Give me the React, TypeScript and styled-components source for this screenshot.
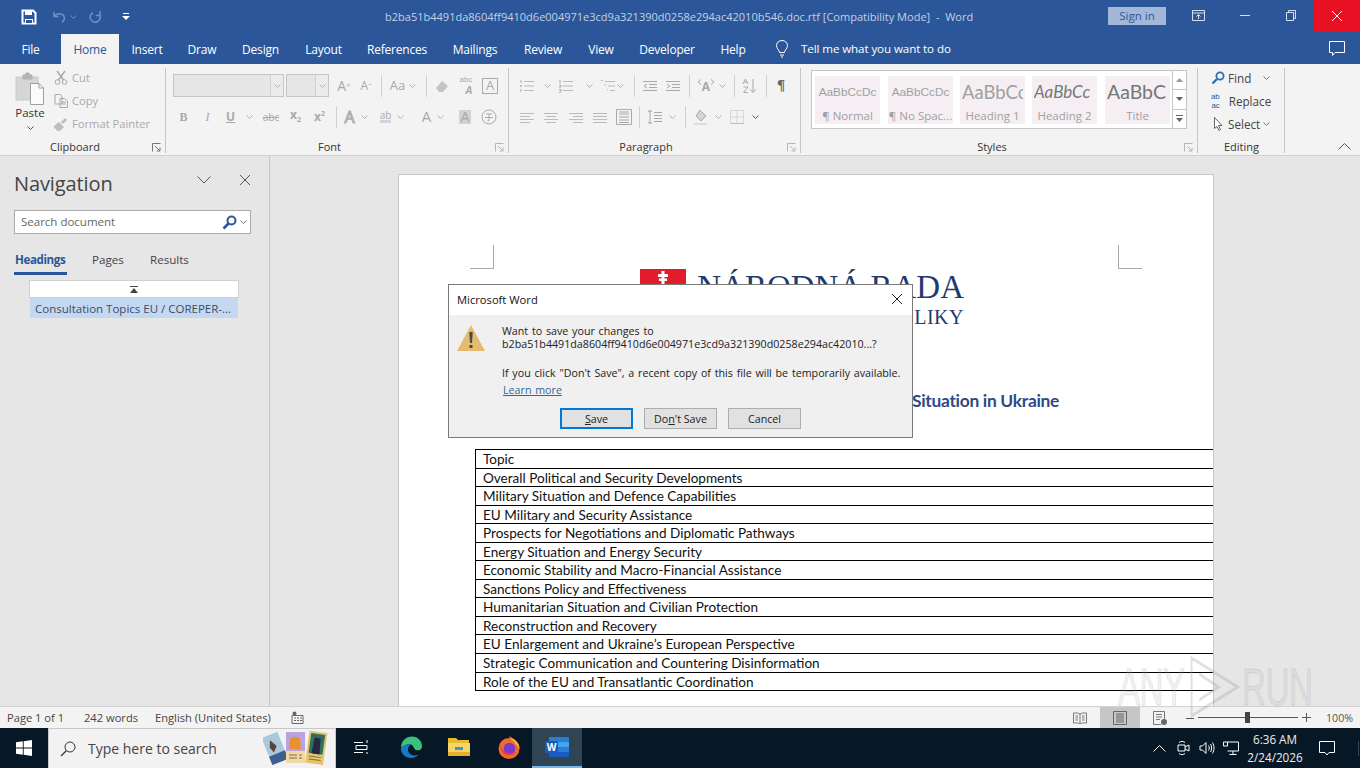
import * as React from 'react'
import { FC, ReactNode } from 'react'
import styled, { createGlobalStyle } from 'styled-components'

const UI = `"Open Sans", "Noto Sans", "Liberation Sans", sans-serif`
const OFF = '#a9a9a9'

const Global = createGlobalStyle`
  html, body { margin: 0; padding: 0; background: #e6e6e6; }
  * { box-sizing: border-box; }
`

const Screen = styled.div`
  position: relative;
  width: 1360px;
  height: 768px;
  overflow: hidden;
  display: flex;
  flex-direction: column;
  font-family: ${UI};
  font-size: 12px;
  color: #333;
`

/* title bar */
const TitleBar = styled.div`
  height: 34px;
  flex: none;
  display: flex;
  align-items: flex-start;
  background: #2b579a;
  color: #fff;
`
const Qat = styled.div`
  width: 385px;
  height: 34px;
  flex: none;
  display: flex;
  align-items: center;
  padding-left: 21px;
`
const QatSlot = styled.div<{ $w: number; $gap?: number }>`
  width: ${p => p.$w}px;
  flex: none;
  display: flex;
  align-items: center;
  gap: ${p => p.$gap ?? 0}px;
`
const DocName = styled.div`
  width: 723px;
  flex: none;
  line-height: 34px;
  font-size: 11.03px;
  color: #c3d0e4;
  white-space: pre;
`
const SignIn = styled.div`
  width: 58px;
  height: 18px;
  margin-top: 7px;
  flex: none;
  background: #a3b7d6;
  color: #2b579a;
  text-align: center;
  line-height: 18px;
  font-size: 11.5px;
`
const WinButton = styled.div<{ $w: number; $red?: boolean; $pl?: number }>`
  width: ${p => p.$w}px;
  padding-left: ${p => p.$pl ?? 0}px;
  height: 31px;
  flex: none;
  display: flex;
  align-items: center;
  justify-content: center;
  background: ${p => (p.$red ? '#e81123' : 'transparent')};
`

/* tabs */
const TabBar = styled.div`
  height: 30px;
  flex: none;
  display: flex;
  background: #2b579a;
`
const Tab = styled.div<{ $w: number; $active?: boolean }>`
  width: ${p => p.$w}px;
  flex: none;
  text-align: center;
  line-height: 30px;
  padding-top: 1px;
  font-size: 12px;
  letter-spacing: -0.2px;
  color: ${p => (p.$active ? '#2b579a' : '#fff')};
  background: ${p => (p.$active ? '#f3f3f3' : 'transparent')};
`
const TellMe = styled.div`
  display: flex;
  align-items: center;
  gap: 12px;
  margin-left: 16px;
  width: 554px;
  padding-bottom: 1px;
  color: #fff;
  font-size: 11.6px;
  letter-spacing: -0.1px;
`
const CommentSlot = styled.div`
  display: flex;
  align-items: center;
`

/* ribbon */
const Ribbon = styled.div`
  height: 92px;
  flex: none;
  display: flex;
  background: #f3f3f3;
  border-bottom: 1px solid #d2d2d2;
`
const Group = styled.div<{ $w: number }>`
  position: relative;
  width: ${p => p.$w}px;
  flex: none;
  height: 91px;
  display: flex;
  flex-direction: column;
  &::after {
    content: '';
    position: absolute;
    right: 0;
    top: 4px;
    bottom: 2px;
    width: 1px;
    background: #c6c6c6;
  }
`
const GroupBody = styled.div`
  flex: 1;
  display: flex;
  min-height: 0;
`
const GroupLabel = styled.div<{ $pr?: number }>`
  height: 18px;
  margin-bottom: -1px;
  padding-right: ${p => p.$pr ?? 0}px;
  flex: none;
  text-align: center;
  line-height: 18px;
  font-size: 11px;
  color: #333;
`
const Launcher = styled.svg`
  position: absolute;
  right: 5px;
  bottom: 3px;
  width: 9px;
  height: 9px;
`
const PasteColumn = styled.div`
  width: 54px;
  flex: none;
  padding: 8px 0 0 15px;
  display: flex;
  flex-direction: column;
  font-size: 11.5px;
  color: #333;
`
const PasteText = styled.div`
  width: 30px;
  text-align: center;
  line-height: 16px;
`
const PasteChevron = styled.div`
  width: 30px;
  display: flex;
  justify-content: center;
  padding-top: 5px;
`
const ClipColumn = styled.div`
  display: flex;
  flex-direction: column;
  padding-top: 2px;
  color: ${OFF};
  font-size: 11.2px;
`
const ClipRow = styled.div`
  height: 23px;
  display: flex;
  align-items: center;
  gap: 4px;
  white-space: nowrap;
`
const RowStack = styled.div<{ $left: number }>`
  display: flex;
  flex-direction: column;
  padding: 10px 0 0 ${p => p.$left}px;
  gap: 8px;
`
const ToolRow = styled.div`
  height: 23px;
  display: flex;
  align-items: center;
`
const Cell = styled.div<{ $w: number; $gap?: number }>`
  width: ${p => p.$w}px;
  height: 22px;
  flex: none;
  display: flex;
  align-items: center;
  justify-content: center;
  gap: ${p => p.$gap ?? 0}px;
  color: ${OFF};
`
const StackedGlyph = styled.div<{ $color?: string }>`
  display: flex;
  flex-direction: column;
  align-items: flex-end;
  font-family: "Liberation Sans", sans-serif;
  color: ${p => p.$color ?? OFF};
`
const StackTop = styled.span<{ $size: number }>`
  font-size: ${p => p.$size}px;
  line-height: ${p => p.$size + 1.2}px;
`
const StackBottom = styled.span<{ $size: number; $italic?: boolean }>`
  font-size: ${p => p.$size}px;
  line-height: ${p => p.$size + 1.2}px;
  font-weight: ${p => (p.$italic ? 700 : 400)};
  font-style: ${p => (p.$italic ? 'italic' : 'normal')};
`
const Sep = styled.div<{ $w: number }>`
  width: ${p => p.$w}px;
  height: 22px;
  flex: none;
  display: flex;
  justify-content: center;
  &::before {
    content: '';
    width: 1px;
    background: #d0d0d0;
  }
`
const Combo = styled.div<{ $w: number; $ml?: number }>`
  width: ${p => p.$w}px;
  margin-left: ${p => p.$ml ?? 0}px;
  height: 23px;
  flex: none;
  background: #e6e6e6;
  border: 1px solid #c6c6c6;
  display: flex;
  justify-content: flex-end;
`
const ComboArrow = styled.div`
  width: 13px;
  border-left: 1px solid #d0d0d0;
  background: #ececec;
  display: flex;
  align-items: center;
  justify-content: center;
`
const Glyph = styled.span<{ $size?: number; $bold?: boolean; $italic?: boolean; $under?: boolean; $serif?: boolean; $box?: boolean; $shade?: boolean; $dark?: boolean; $outline?: boolean; $bar?: boolean }>`
  font-family: ${p => (p.$serif ? '"Liberation Serif", serif' : UI)};
  font-size: ${p => p.$size ?? 13}px;
  font-weight: ${p => (p.$bold ? 700 : 400)};
  font-style: ${p => (p.$italic ? 'italic' : 'normal')};
  text-decoration: ${p => (p.$under ? 'underline' : 'none')};
  color: ${p => (p.$outline ? 'transparent' : p.$dark ? '#666' : OFF)};
  line-height: 1;
  ${p => (p.$box ? 'border: 1px solid #aaa; padding: 0 3px 1px;' : '')}
  ${p => (p.$shade ? 'background: #d2d2d2; padding: 0 2px;' : '')}
  ${p => (p.$outline ? `-webkit-text-stroke: 1px ${OFF};` : '')}
  ${p => (p.$bar ? 'border-bottom: 3px solid #d4d4d4;' : '')}
`
const Tiny = styled.sub`
  font-size: 7px;
`
const Small = styled.sup`
  font-size: 7px;
`
const Gallery = styled.div`
  margin: 6px 0 0 10px;
  width: 376px;
  height: 59px;
  flex: none;
  background: #fff;
  border: 1px solid #c6c6c6;
  display: flex;
  padding: 5px 0 0 3px;
`
const StyleTile = styled.div<{ $mr: number }>`
  width: 65px;
  height: 48px;
  margin-right: ${p => p.$mr}px;
  flex: none;
  background: #f5eff3;
  display: flex;
  flex-direction: column;
  align-items: center;
  overflow: hidden;
`
const TilePreview = styled.div<{ $size: number; $italic?: boolean; $dark?: boolean }>`
  height: 30px;
  flex: none;
  line-height: 32px;
  font-family: ${p => (p.$size > 14 ? 'Lato, sans-serif' : '"Liberation Sans", sans-serif')};
  font-size: ${p => p.$size}px;
  font-style: ${p => (p.$italic ? 'italic' : 'normal')};
  font-weight: 400;
  white-space: nowrap;
  width: 61px;
  overflow: hidden;
  text-align: ${p => (p.$size > 14 ? 'left' : 'center')};
  color: ${p => (p.$dark ? '#777' : '#a0a0a0')};
`
const TileName = styled.div`
  height: 18px;
  flex: none;
  font-size: 11.5px;
  line-height: 20px;
  color: #a0a0a0;
  white-space: nowrap;
`
const GalleryArrows = styled.div`
  margin: -5px 0 0 auto;
  width: 14px;
  height: 57px;
  flex: none;
  border-left: 1px solid #c6c6c6;
  display: flex;
  flex-direction: column;
`
const GalleryArrow = styled.div<{ $last?: boolean }>`
  flex: 1;
  display: flex;
  align-items: center;
  justify-content: center;
  border-bottom: ${p => (p.$last ? 'none' : '1px solid #c6c6c6')};
`
const EditColumn = styled.div`
  display: flex;
  flex-direction: column;
  padding: 2px 0 0 13px;
  font-size: 11.7px;
  color: #444;
`
const EditRow = styled.div<{ $gap?: number }>`
  height: 23px;
  display: flex;
  align-items: center;
  gap: ${p => p.$gap ?? 3}px;
  white-space: nowrap;
`
const ReplaceText = styled.span`
  margin-left: 5px;
`
const Collapse = styled.div`
  flex: 1;
  display: flex;
  align-items: flex-end;
  justify-content: flex-end;
  padding: 0 9px 5px 0;
`

/* main */
const Main = styled.div`
  flex: 1;
  min-height: 0;
  display: flex;
  background: #e6e6e6;
`
const NavPanel = styled.div`
  width: 270px;
  flex: none;
  border-right: 1px solid #c6c6c6;
  padding: 0 19px 0 14px;
  display: flex;
  flex-direction: column;
`
const NavHead = styled.div`
  height: 54px;
  margin-right: -4px;
  display: flex;
  align-items: center;
  padding-bottom: 7px;
`
const NavTitle = styled.div`
  font-size: 20px;
  letter-spacing: -0.1px;
  color: #444;
  width: 183px;
  flex: none;
  padding-top: 7px;
`
const NavClose = styled.div`
  margin-left: 28px;
`
const Search = styled.div`
  width: 237px;
  height: 24px;
  background: #fff;
  border: 1px solid #ababab;
  display: flex;
  align-items: center;
  padding: 0 3px 0 6px;
  color: #666;
  font-size: 11.5px;
`
const SearchLabel = styled.span`
  margin-bottom: 2px;
`
const SearchIcons = styled.div`
  margin-left: auto;
  display: flex;
  align-items: center;
  gap: 3px;
`
const NavTabs = styled.div`
  display: flex;
  height: 41px;
  align-items: stretch;
`
const NavTab = styled.div<{ $w: number; $active?: boolean; $ml?: number }>`
  width: ${p => p.$w}px;
  margin-left: ${p => p.$ml ?? 0}px;
  height: 41px;
  padding: 18px 0 0 ${p => (p.$active ? 1 : 0)}px;
  font-size: 11.6px;
  font-weight: ${p => (p.$active ? 700 : 400)};
  letter-spacing: ${p => (p.$active ? '-0.4px' : '0')};
  color: ${p => (p.$active ? '#2b579a' : '#444')};
  border-bottom: 3px solid ${p => (p.$active ? '#2b579a' : 'transparent')};
  white-space: nowrap;
`
const ScrollTop = styled.div`
  margin: 5px 0 0 15px;
  width: 210px;
  height: 18px;
  background: #fff;
  border: 1px solid #d0d0d0;
  display: flex;
  align-items: center;
  justify-content: center;
`
const HeadingItem = styled.div`
  margin: 0 0 0 16px;
  width: 208px;
  height: 20px;
  background: #c5d8f2;
  padding-left: 5px;
  line-height: 21px;
  font-size: 11.5px;
  color: #3a4d68;
  white-space: nowrap;
`

const DocArea = styled.div`
  flex: 1;
  min-width: 0;
  padding: 18px 0 0 128px;
  overflow: hidden;
`
const Page = styled.div`
  width: 816px;
  height: 600px;
  background: #fff;
  border: 1px solid #c6c6c6;
  overflow: hidden;
  font-family: Lato, "Open Sans", sans-serif;
`
const CropRow = styled.div`
  display: flex;
  justify-content: space-between;
  padding: 70px 71px 0 71px;
`
const CropMark = styled.div<{ $right?: boolean }>`
  width: 24px;
  height: 24px;
  border-bottom: 1px solid #a8a8a8;
  ${p => (p.$right ? 'border-left' : 'border-right')}: 1px solid #a8a8a8;
`
const Logo = styled.div`
  display: flex;
  margin-left: 241px;
  height: 60px;
`
const Crest = styled.div`
  width: 46px;
  height: 46px;
  flex: none;
  background: #e21d2b;
  display: flex;
  justify-content: center;
`
const LogoText = styled.div`
  margin-left: 11px;
  width: 267px;
  font-family: "Liberation Serif", serif;
  color: #1f3a6e;
  text-align: right;
  white-space: nowrap;
`
const LogoBig = styled.div`
  font-size: 33px;
  line-height: 36px;
`
const LogoSmall = styled.div`
  font-size: 20px;
  line-height: 24px;
  letter-spacing: 0.5px;
  display: flex;
  justify-content: flex-end;
`
const DocHeading = styled.div`
  margin: 60px 0 36px 513px;
  height: 24px;
  line-height: 24px;
  font-size: 17.4px;
  font-weight: 700;
  letter-spacing: -0.3px;
  color: #2f4a86;
  white-space: nowrap;
`
const TopicTable = styled.div`
  margin-left: 76px;
  width: 760px;
  border-top: 1px solid #000;
  border-left: 1px solid #000;
`
const TopicRow = styled.div`
  height: 18.55px;
  border-bottom: 1px solid #000;
  padding-left: 7px;
  font-size: 13.55px;
  line-height: 18px;
  color: #111;
  white-space: nowrap;
`

/* dialog */
const Dialog = styled.div`
  position: absolute;
  left: 448px;
  top: 284px;
  width: 465px;
  height: 154px;
  background: #f0f0f0;
  border: 1px solid #7a7a7a;
  display: flex;
  flex-direction: column;
  font-size: 10.7px;
  word-spacing: 1px;
  color: #222;
`
const DialogTitle = styled.div`
  height: 30px;
  flex: none;
  background: #fff;
  display: flex;
  align-items: center;
  justify-content: space-between;
  padding: 0 9px 2px 8px;
  font-size: 11.2px;
  word-spacing: 0;
  color: #111;
`
const DialogBody = styled.div`
  display: flex;
  padding: 9px 0 0 8px;
`
const DialogText = styled.div`
  margin-left: 17px;
  line-height: 13px;
  padding-top: 1px;
  white-space: nowrap;
`
const Gap = styled.div`
  height: 16px;
`
const LearnMore = styled.a`
  display: block;
  margin: 3px 0 0 1px;
  line-height: 14px;
  color: #37659b;
  text-decoration: underline;
`
const DialogButtons = styled.div`
  display: flex;
  gap: 11px;
  margin: 11px 0 0 111px;
`
const DialogButton = styled.div<{ $primary?: boolean }>`
  width: 73px;
  height: 21px;
  background: #e1e1e1;
  border: ${p => (p.$primary ? '2px solid #0078d7' : '1px solid #adadad')};
  text-align: center;
  line-height: ${p => (p.$primary ? 18 : 20)}px;
  color: #222;
  word-spacing: 0;
`

/* status bar */
const StatusBar = styled.div`
  height: 22px;
  flex: none;
  display: flex;
  align-items: center;
  background: #f3f3f3;
  border-top: 1px solid #d2d2d2;
  font-size: 11.15px;
  color: #444;
`
const StatusText = styled.div<{ $w: number; $ml: number }>`
  width: ${p => p.$w}px;
  margin-left: ${p => p.$ml}px;
  flex: none;
  white-space: nowrap;
`
const ViewButton = styled.div<{ $w: number; $active?: boolean; $ml?: number }>`
  width: ${p => p.$w}px;
  margin-left: ${p => p.$ml ?? 0}px;
  height: 21px;
  flex: none;
  display: flex;
  align-items: center;
  justify-content: center;
  background: ${p => (p.$active ? '#c6c6c6' : 'transparent')};
`
const Zoom = styled.div`
  display: flex;
  align-items: center;
  margin-left: 6px;
  gap: 4px;
  color: #555;
`
const Slider = styled.div`
  position: relative;
  width: 100px;
  height: 1px;
  background: #555;
`
const Thumb = styled.div`
  position: absolute;
  left: 47px;
  top: -5px;
  width: 5px;
  height: 11px;
  background: #444;
`
const ZoomValue = styled.div`
  margin-left: 11px;
  font-size: 10.7px;
`

/* taskbar */
const Taskbar = styled.div`
  height: 40px;
  flex: none;
  display: flex;
  background: #061725;
  color: #fff;
`
const Start = styled.div`
  width: 48px;
  flex: none;
  display: flex;
  align-items: center;
  justify-content: center;
`
const SearchBox = styled.div`
  width: 288px;
  flex: none;
  background: #f2f2f2;
  border: 1px solid #c8c8c8;
  border-bottom: none;
  display: flex;
  align-items: center;
  padding-left: 11px;
  color: #444;
  font-size: 14px;
  gap: 12px;
  white-space: nowrap;
`
const SearchCards = styled.div`
  margin-left: auto;
  padding-right: 4px;
  display: flex;
`
const TaskApp = styled.div<{ $w: number; $active?: boolean; $pl?: number }>`
  width: ${p => p.$w}px;
  padding-left: ${p => p.$pl ?? 0}px;
  flex: none;
  display: flex;
  align-items: center;
  justify-content: center;
  background: ${p => (p.$active ? '#2f4554' : 'transparent')};
  border-bottom: 2px solid ${p => (p.$active ? '#76b9ed' : 'transparent')};
`
const Tray = styled.div`
  margin-left: auto;
  display: flex;
  align-items: center;
`
const TrayIcon = styled.div<{ $w: number }>`
  width: ${p => p.$w}px;
  flex: none;
  display: flex;
  justify-content: center;
`
const Clock = styled.div`
  width: 60px;
  margin-left: 2px;
  text-align: center;
  font-size: 11.7px;
  line-height: 18px;
  color: #eee;
`
const Notify = styled.div`
  width: 54px;
  flex: none;
  display: flex;
  justify-content: center;
  border-right: 1px solid #34444f;
  margin-right: 1px;
  padding-right: 10px;
`

/* watermark */
const Watermark = styled.div`
  position: absolute;
  left: 1118px;
  top: 656px;
  display: flex;
  align-items: center;
  gap: 3px;
  font-family: "Liberation Sans", sans-serif;
  font-size: 52px;
  line-height: 58px;
  color: rgba(170, 170, 170, 0.18);
  -webkit-text-stroke: 1px rgba(150, 150, 150, 0.22);
  pointer-events: none;
  white-space: nowrap;
  transform: scaleX(0.64);
  transform-origin: left center;
  letter-spacing: -1px;
`

const Icon: FC<{ w?: number; h?: number; box?: string; stroke?: string; fill?: string; sw?: number; children: ReactNode }> = ({
  w = 16, h = 16, box, stroke = OFF, fill = 'none', sw = 1, children,
}) => (
  <svg width={w} height={h} viewBox={box ?? `0 0 ${w} ${h}`} fill={fill} stroke={stroke} strokeWidth={sw} style={{ display: 'block', flex: 'none' }}>
    {children}
  </svg>
)

const Chev: FC<{ color?: string }> = ({ color = '#b0b0b0' }) => (
  <Icon w={7} h={4} stroke={color}><path d="M.5.5 3.5 3.5 6.5.5" /></Icon>
)

const Lines: FC<{ kind: 'left' | 'center' | 'right' | 'just' }> = ({ kind }) => {
  const rows = kind === 'left' ? [[1, 15], [1, 11], [1, 15], [1, 11]]
    : kind === 'center' ? [[1, 15], [3, 13], [1, 15], [3, 13]]
    : kind === 'right' ? [[1, 15], [5, 15], [1, 15], [5, 15]]
    : [[1, 15], [1, 15], [1, 15], [1, 15]]
  return (
    <Icon w={16} h={12} stroke="#bbb">
      {rows.map((r, i) => <path key={i} d={`M${r[0]} ${2.5 + i * 3}H${r[1]}`} />)}
    </Icon>
  )
}

const tabs: [string, number][] = [
  ['Home', 58], ['Insert', 56], ['Draw', 54], ['Design', 63], ['Layout', 63], ['References', 84],
  ['Mailings', 72], ['Review', 64], ['View', 52], ['Developer', 80], ['Help', 52],
]

const topics = [
  'Topic',
  'Overall Political and Security Developments',
  'Military Situation and Defence Capabilities',
  'EU Military and Security Assistance',
  'Prospects for Negotiations and Diplomatic Pathways',
  'Energy Situation and Energy Security',
  'Economic Stability and Macro-Financial Assistance',
  'Sanctions Policy and Effectiveness',
  'Humanitarian Situation and Civilian Protection',
  'Reconstruction and Recovery',
  'EU Enlargement and Ukraine’s European Perspective',
  'Strategic Communication and Countering Disinformation',
  'Role of the EU and Transatlantic Coordination',
]

const tiles = [
  { preview: 'AaBbCcDc', size: 11.8, name: '¶ Normal', mr: 8 },
  { preview: 'AaBbCcDc', size: 11.8, name: '¶ No Spac...', mr: 7 },
  { preview: 'AaBbCc', size: 18.5, name: 'Heading 1', mr: 7 },
  { preview: 'AaBbCc', size: 17, name: 'Heading 2', mr: 8, italic: true, dark: true },
  { preview: 'AaBbC', size: 19.5, name: 'Title', mr: 0, dark: true },
]

const LauncherIcon: FC<{ off?: boolean }> = ({ off }) => (
  <Launcher viewBox="0 0 9 9" fill="none" stroke={off ? '#b5b5b5' : '#777'}>
    <path d="M.5 8.5V.5H8.5M3 3 8 8M8 4.5V8H4.5" />
  </Launcher>
)

const TitleStrip: FC = () => (
  <TitleBar>
    <Qat>
      <QatSlot $w={31}>
        <Icon w={16} h={16} stroke="#fff" fill="#fff">
          <path d="M1.5 1.5H12L14.5 4V14.5H1.5Z" fill="none" strokeWidth="2" />
          <path d="M4 2H11V6H4ZM4 10H12V14H4Z" stroke="none" />
          <path d="M5 11H11V14H5Z" fill="#2b579a" stroke="none" />
        </Icon>
      </QatSlot>
      <QatSlot $w={37} $gap={4}>
        <Icon w={14} h={12} stroke="#6f8fbd" sw={1.6}><path d="M2 1V5.5H6.5M2.5 5.5C4 2.5 9 1.5 11.5 4.5 13.5 7 12 10 10 11" /></Icon>
        <Chev color="#6f8fbd" />
      </QatSlot>
      <QatSlot $w={33}>
        <Icon w={14} h={14} stroke="#6f8fbd" sw={1.6}><path d="M11 1V5.5H6.8M10.6 5A5 5 0 1 1 4 2.8" /></Icon>
      </QatSlot>
      <QatSlot $w={10}>
        <Icon w={8} h={8} stroke="none" fill="#fff"><path d="M1 0H7V1H1ZM0 3H8L4 7Z" /></Icon>
      </QatSlot>
    </Qat>
    <DocName>b2ba51b4491da8604ff9410d6e004971e3cd9a321390d0258e294ac42010b546.doc.rtf [Compatibility Mode]  -  Word</DocName>
    <SignIn>Sign in</SignIn>
    <WinButton $w={64}>
      <Icon w={13} h={11} stroke="#d6e0ef"><path d="M.5.5H12.5V10.5H.5ZM.5 3H12.5M6.5 9V4.5M4.5 6.5 6.5 4.5 8.5 6.5" /></Icon>
    </WinButton>
    <WinButton $w={30}><Icon w={10} h={2} stroke="#d6e0ef"><path d="M0 .5H10" /></Icon></WinButton>
    <WinButton $w={54} $pl={8}>
      <Icon w={10} h={11} stroke="#d6e0ef"><path d="M.5 2.5H7.5V10.5H.5ZM2.5 2.5V.5H9.5V8.5H7.5" /></Icon>
    </WinButton>
    <WinButton $w={46} $red>
      <Icon w={12} h={12} stroke="#fff"><path d="M1 1 11 11M11 1 1 11" /></Icon>
    </WinButton>
  </TitleBar>
)

const Tabs: FC = () => (
  <TabBar>
    <Tab $w={61}>File</Tab>
    {tabs.map(([name, w]) => <Tab key={name} $w={w} $active={name === 'Home'}>{name}</Tab>)}
    <TellMe>
      <Icon w={14} h={18} stroke="#fff">
        <path d="M4.5 12.5C4.5 10 1.5 9 1.5 5.5A5.5 5 0 0 1 12.5 5.5C12.5 9 9.5 10 9.5 12.5ZM5 15H9M6 17H8" />
      </Icon>
      Tell me what you want to do
    </TellMe>
    <CommentSlot>
      <Icon w={16} h={16} stroke="#fff"><path d="M.5.5H15.5V11.5H6L3.5 14.5V11.5H.5Z" /></Icon>
    </CommentSlot>
  </TabBar>
)

const ClipboardGroup: FC = () => (
  <Group $w={166}>
    <GroupBody>
      <PasteColumn>
        <Icon w={30} h={33}>
          <path d="M1 5H23V28H1Z" fill="#d6d6d6" stroke="#c8c8c8" />
          <path d="M8 5V3H10L11 1H14L15 3H17V7H8Z" fill="#b5b5b5" stroke="#b0b0b0" />
          <path d="M15.5 11.5H24L28.5 16V32.5H15.5Z" fill="#fbfbfb" stroke="#9f9f9f" />
          <path d="M24 11.5V16H28.5" stroke="#9f9f9f" />
        </Icon>
        <PasteText>Paste</PasteText>
        <PasteChevron><Chev color="#555" /></PasteChevron>
      </PasteColumn>
      <ClipColumn>
        <ClipRow>
          <Icon w={14} h={15}><path d="M3 1 9.5 10M11 1 4.5 10" strokeWidth="1.5" /><circle cx="3.5" cy="12" r="2.3" /><circle cx="10.5" cy="12" r="2.3" /></Icon>
          Cut
        </ClipRow>
        <ClipRow>
          <Icon w={14} h={14}><path d="M1 .5H6.5L8 2V10H1ZM6 4.5H10.5L13.5 7V13.5H6ZM7.5 8H12M7.5 10H12" /></Icon>
          Copy
        </ClipRow>
        <ClipRow>
          <Icon w={14} h={14} stroke="none" fill="#bdbdbd"><path d="M0 9 5 5 10 10 6 14H3L2 12 0 11ZM7 5 11 1 13 3 9 7Z" /></Icon>
          Format Painter
        </ClipRow>
      </ClipColumn>
    </GroupBody>
    <GroupLabel $pr={16}>Clipboard</GroupLabel>
    <LauncherIcon />
  </Group>
)

const FontGroup: FC = () => (
  <Group $w={343}>
    <RowStack $left={7}>
      <ToolRow>
        <Combo $w={111}><ComboArrow><Chev /></ComboArrow></Combo>
        <Combo $w={43} $ml={2}><ComboArrow><Chev /></ComboArrow></Combo>
        <Cell $w={30}><Glyph $size={14}>A</Glyph><Glyph $size={8}>^</Glyph></Cell>
        <Cell $w={14}><Glyph $size={12}>A</Glyph><Glyph $size={8}>ˇ</Glyph></Cell>
        <Sep $w={16} />
        <Cell $w={28} $gap={4}><Glyph $size={13}>Aa</Glyph><Chev /></Cell>
        <Sep $w={18} />
        <Cell $w={14}><Icon w={14} h={14} stroke="none" fill="#c4c4c4"><path d="M1 9 7 2 13 7 8 13H4Z" /></Icon></Cell>
        <Cell $w={34}>
          <StackedGlyph>
            <StackTop $size={8}>abc</StackTop>
            <StackBottom $size={10} $italic>A</StackBottom>
          </StackedGlyph>
        </Cell>
        <Cell $w={14}><Glyph $size={13} $box>A</Glyph></Cell>
      </ToolRow>
      <ToolRow>
        <Cell $w={21}><Glyph $size={12} $bold $serif>B</Glyph></Cell>
        <Cell $w={27}><Glyph $size={12} $italic $serif>I</Glyph></Cell>
        <Cell $w={37} $gap={11}><Glyph $size={12} $bold $under>U</Glyph><Chev /></Cell>
        <Cell $w={26}><Glyph $size={10}><s>abc</s></Glyph></Cell>
        <Cell $w={23}><Glyph $size={12} $bold>x<Tiny>2</Tiny></Glyph></Cell>
        <Cell $w={25}><Glyph $size={12} $bold>x<Small>2</Small></Glyph></Cell>
        <Sep $w={8} />
        <Cell $w={32} $gap={6}><Glyph $size={16} $outline>A</Glyph><Chev /></Cell>
        <Cell $w={40} $gap={6}><Glyph $size={10} $bar>ab</Glyph><Chev /></Cell>
        <Cell $w={42} $gap={6}><Glyph $size={15}>A</Glyph><Chev /></Cell>
        <Cell $w={22}><Glyph $size={14} $shade>A</Glyph></Cell>
        <Cell $w={26}>
          <Icon w={16} h={16}><circle cx="8" cy="8" r="7" /><path d="M5 5H11M4 8.5H12M8 5V11.5L6.5 12" /></Icon>
        </Cell>
      </ToolRow>
    </RowStack>
    <GroupBody />
    <GroupLabel $pr={16}>Font</GroupLabel>
    <LauncherIcon off />
  </Group>
)

const ListIcon: FC<{ kind: 'bullet' | 'number' | 'multi' }> = ({ kind }) => (
  <Icon w={16} h={14} stroke="#bbb">
    {kind === 'multi'
      ? <path d="M5 2.5H15M8 7H15M10 11.5H15M1 1.5H3M4 6H6M7 10.5H8" />
      : <path d="M5 2.5H15M5 7H15M5 11.5H15" />}
    {kind === 'bullet' && <path d="M1 1.5H3V3.5H1ZM1 6H3V8H1ZM1 10.5H3V12.5H1Z" fill="#c0c0c0" stroke="none" />}
    {kind === 'number' && <path d="M2 1V4M1 6H3V8H1M1 10.5H3V13H1" stroke="#aaa" />}
  </Icon>
)

const ParagraphGroup: FC = () => (
  <Group $w={292}>
    <RowStack $left={6}>
      <ToolRow>
        <Cell $w={40} $gap={9}><ListIcon kind="bullet" /><Chev /></Cell>
        <Cell $w={40} $gap={12}><ListIcon kind="number" /><Chev /></Cell>
        <Cell $w={34} $gap={1}><ListIcon kind="multi" /><Chev /></Cell>
        <Sep $w={10} />
        <Cell $w={22}><Icon w={16} h={12}><path d="M1 1.5H15M7 4.5H15M7 7.5H15M1 10.5H15M5 4 2 6 5 8" /></Icon></Cell>
        <Cell $w={24}><Icon w={16} h={12}><path d="M1 1.5H15M7 4.5H15M7 7.5H15M1 10.5H15M2 4 5 6 2 8" /></Icon></Cell>
        <Sep $w={8} />
        <Cell $w={36} $gap={4}>
          <Icon w={18} h={18}>
            <path d="M1 5 4 2.5M1 5 4 7.5M17 5 14 2.5M17 5 14 7.5" />
            <text x="9" y="14" fontSize="12" fontWeight="700" fontFamily="Open Sans" textAnchor="middle" fill={OFF} stroke="none">A</text>
          </Icon>
          <Chev />
        </Cell>
        <Sep $w={10} />
        <Cell $w={22}>
          <Icon w={16} h={16}><path d="M1 6 3.5 1 6 6M2 4H5M1.5 9H6L1.5 14.5H6M11 1V14M8.5 11.5 11 14.5 13.5 11.5" /></Icon>
        </Cell>
        <Sep $w={10} />
        <Cell $w={20}><Glyph $size={15} $bold $dark $serif>¶</Glyph></Cell>
      </ToolRow>
      <ToolRow>
        <Cell $w={24}><Lines kind="left" /></Cell>
        <Cell $w={24}><Lines kind="center" /></Cell>
        <Cell $w={25}><Lines kind="right" /></Cell>
        <Cell $w={24}><Lines kind="just" /></Cell>
        <Cell $w={24}>
          <Icon w={16} h={16}><path d="M.5.5H15.5V15.5H.5ZM3 5H13M3 8H13M3 11H13M3 13.5H13M3 3H13" /></Icon>
        </Cell>
        <Sep $w={6} />
        <Cell $w={38} $gap={6}>
          <Icon w={16} h={16}><path d="M3 1V15M1 3 3 1 5 3M1 13 3 15 5 13M7 3.5H15M7 6.5H15M7 9.5H15M7 12.5H15" /></Icon>
          <Chev />
        </Cell>
        <Sep $w={10} />
        <Cell $w={34} $gap={6}>
          <Icon w={16} h={16} fill="#d4d4d4"><path d="M7 1 13 7 8 12 3 7Z" /><path d="M1 15H14" strokeWidth="2" stroke="#ddd" /></Icon>
          <Chev />
        </Cell>
        <Cell $w={40} $gap={8}>
          <Icon w={14} h={14} stroke="#bbb"><path d="M.5.5H13.5V13.5H.5ZM7 .5V13.5M.5 7H13.5" strokeDasharray="1 1" /><path d="M.5 13.5H13.5" /></Icon>
          <Chev color="#555" />
        </Cell>
      </ToolRow>
    </RowStack>
    <GroupBody />
    <GroupLabel $pr={18}>Paragraph</GroupLabel>
    <LauncherIcon off />
  </Group>
)

const StylesGroup: FC = () => (
  <Group $w={397}>
    <GroupBody>
      <Gallery>
        {tiles.map(t => (
          <StyleTile key={t.name} $mr={t.mr}>
            <TilePreview $size={t.size} $italic={t.italic} $dark={t.dark}>{t.preview}</TilePreview>
            <TileName>{t.name}</TileName>
          </StyleTile>
        ))}
        <GalleryArrows>
          <GalleryArrow><Icon w={7} h={4} stroke="none" fill="#999"><path d="M3.5 0 7 4H0Z" /></Icon></GalleryArrow>
          <GalleryArrow><Icon w={7} h={4} stroke="none" fill="#666"><path d="M0 0H7L3.5 4Z" /></Icon></GalleryArrow>
          <GalleryArrow $last><Icon w={7} h={7} stroke="none" fill="#666"><path d="M0 0H7V1H0ZM0 3H7L3.5 7Z" /></Icon></GalleryArrow>
        </GalleryArrows>
      </Gallery>
    </GroupBody>
    <GroupLabel $pr={15}>Styles</GroupLabel>
    <LauncherIcon off />
  </Group>
)

const EditingGroup: FC = () => (
  <Group $w={87}>
    <GroupBody>
      <EditColumn>
        <EditRow>
          <Icon w={14} h={14} stroke="#2b6fb5" sw={1.8}><circle cx="9" cy="5" r="3.6" /><path d="M6 8 1.5 12.5" strokeWidth="2.4" /></Icon>
          Find
          <span style={{ width: 6 }} />
          <Chev color="#777" />
        </EditRow>
        <EditRow $gap={4}>
          <StackedGlyph $color="#2b579a">
            <StackTop $size={7.8}>ab</StackTop>
            <StackBottom $size={7.8}>ac</StackBottom>
          </StackedGlyph>
          <ReplaceText>Replace</ReplaceText>
        </EditRow>
        <EditRow>
          <Icon w={14} h={16} stroke="#666"><path d="M3.5 1.5V12.5L6 10.5 8 14.5 9.5 13.5 7.5 9.5H11Z" fill="#fff" /></Icon>
          Select
          <Chev color="#777" />
        </EditRow>
      </EditColumn>
    </GroupBody>
    <GroupLabel>Editing</GroupLabel>
  </Group>
)

const NavigationPane: FC = () => (
  <NavPanel>
    <NavHead>
      <NavTitle>Navigation</NavTitle>
      <Icon w={14} h={8} stroke="#555"><path d="M.5.5 7 7 13.5.5" /></Icon>
      <NavClose><Icon w={12} h={12} stroke="#555"><path d="M1 1 11 11M11 1 1 11" /></Icon></NavClose>
    </NavHead>
    <Search>
      <SearchLabel>Search document</SearchLabel>
      <SearchIcons>
        <Icon w={15} h={15} stroke="#2b579a" sw={2}><circle cx="9.5" cy="5.5" r="4" /><path d="M6.5 8.5 1.5 13.5" strokeWidth="2.6" /></Icon>
        <Chev color="#777" />
      </SearchIcons>
    </Search>
    <NavTabs>
      <NavTab $w={53} $active>Headings</NavTab>
      <NavTab $w={58} $ml={25}>Pages</NavTab>
      <NavTab $w={50}>Results</NavTab>
    </NavTabs>
    <ScrollTop>
      <Icon w={8} h={7} stroke="none" fill="#444"><path d="M0 0H8V1H0ZM4 2 8 7H0Z" /></Icon>
    </ScrollTop>
    <HeadingItem>Consultation Topics EU / COREPER-...</HeadingItem>
  </NavPanel>
)

const DocumentPage: FC = () => (
  <DocArea>
    <Page>
      <CropRow>
        <CropMark />
        <CropMark $right />
      </CropRow>
      <Logo>
        <Crest>
          <Icon w={14} h={16} stroke="none" fill="#fff"><path d="M5.5 2H8.5V5H12V8H8.5V9.5H11V12H8.5V16H5.5V12H3V9.5H5.5V8H2V5H5.5Z" /></Icon>
        </Crest>
        <LogoText>
          <LogoBig>NÁRODNÁ RADA</LogoBig>
          <LogoSmall>SLOVENSKEJ REPUBLIKY</LogoSmall>
        </LogoText>
      </Logo>
      <DocHeading>Situation in Ukraine</DocHeading>
      <TopicTable>
        {topics.map(t => <TopicRow key={t}>{t}</TopicRow>)}
      </TopicTable>
    </Page>
  </DocArea>
)

const SaveDialog: FC = () => (
  <Dialog>
    <DialogTitle>
      Microsoft Word
      <Icon w={12} h={12} stroke="#222"><path d="M1 1 11 11M11 1 1 11" /></Icon>
    </DialogTitle>
    <DialogBody>
      <Icon w={28} h={28} stroke="none">
        <path d="M14 1 28 27H0Z" fill="#e5bb72" />
        <path d="M12.3 8H15.7L15 19H13ZM12.5 21H15.5V24H12.5Z" fill="#4a4a4a" />
      </Icon>
      <DialogText>
        Want to save your changes to
        <br />
        b2ba51b4491da8604ff9410d6e004971e3cd9a321390d0258e294ac42010...?
        <Gap />
        If you click "Don't Save", a recent copy of this file will be temporarily available.
        <LearnMore>Learn more</LearnMore>
      </DialogText>
    </DialogBody>
    <DialogButtons>
      <DialogButton $primary><u>S</u>ave</DialogButton>
      <DialogButton>Do<u>n</u>'t Save</DialogButton>
      <DialogButton>Cancel</DialogButton>
    </DialogButtons>
  </Dialog>
)

const Status: FC = () => (
  <StatusBar>
    <StatusText $w={57} $ml={7}>Page 1 of 1</StatusText>
    <StatusText $w={54} $ml={20}>242 words</StatusText>
    <StatusText $w={118} $ml={17}>English (United States)</StatusText>
    <StatusText $w={14} $ml={18}>
      <Icon w={13} h={13} stroke="#666"><path d="M1 4.5H12V12.5H1ZM3 7H5M6 7H8M9 7H11M3 9.5H5M6 9.5H8M9 9.5H11" /><circle cx="3.5" cy="2.5" r="2" fill="#666" stroke="none" /></Icon>
    </StatusText>
    <ViewButton $w={40} $ml={755}>
      <Icon w={14} h={12} stroke="#777"><path d="M7 2C5 .8 3 .8 .5 1V11C3 10.8 5 10.8 7 12 9 10.8 11 10.8 13.5 11V1C11 .8 9 .8 7 2ZM7 2V12M2.5 4H5M2.5 6H5M2.5 8H5M9 4H11.5M9 6H11.5M9 8H11.5" /></Icon>
    </ViewButton>
    <ViewButton $w={40} $active>
      <Icon w={14} h={14} stroke="#666"><path d="M.5.5H13.5V13.5H.5ZM3 3H11M3 5H11M3 7H11M3 9H11M3 11H11" /></Icon>
    </ViewButton>
    <ViewButton $w={40}>
      <Icon w={14} h={14} stroke="#777"><path d="M.5.5H11.5V8M8 13.5H.5V.5M3 3.5H9M3 6H9M3 8.5H7" /><circle cx="11" cy="11" r="3" fill="#666" stroke="none" /></Icon>
    </ViewButton>
    <Zoom>
      <Icon w={8} h={8} stroke="#555"><path d="M0 4.5H8" /></Icon>
      <Slider><Thumb /></Slider>
      <Icon w={9} h={9} stroke="#555"><path d="M0 4.5H9M4.5 0V9" /></Icon>
      <ZoomValue>100%</ZoomValue>
    </Zoom>
  </StatusBar>
)

const Cards: FC = () => (
  <svg width="68" height="38" viewBox="0 0 68 38" style={{ display: 'block', marginTop: 1 }}>
    <g transform="rotate(-22 12 20)">
      <rect x="4" y="4" width="17" height="29" fill="#a9c9dd" />
      <rect x="4" y="24" width="17" height="9" fill="#3c5f8f" />
      <path d="M11 9 15 17 10 22 8 16Z" fill="#5a4536" />
    </g>
    <rect x="23" y="2" width="19" height="31" fill="#b9a4e0" />
    <path d="M27 9C29 6 35 6 37 9L38 19H26Z" fill="#e9912f" />
    <rect x="23" y="21" width="19" height="12" fill="#f0d9a6" />
    <path d="M26 25H34M26 28H34M36 25H39M36 28H39" stroke="#7a6a4a" />
    <g transform="rotate(8 54 20)">
      <rect x="44" y="2" width="18" height="32" fill="#e3c46b" />
      <rect x="46" y="4" width="14" height="20" fill="#2f6f62" />
      <path d="M50 8H56L57 24H49Z" fill="#2a2540" />
      <path d="M47 27H59M47 30H59" stroke="#8a6f2d" />
    </g>
  </svg>
)

const TaskStrip: FC = () => (
  <Taskbar>
    <Start>
      <Icon w={16} h={16} stroke="none" fill="#fff"><path d="M0 2.3 6.8 1.3V7.6H0ZM7.7 1.2 16 0V7.6H7.7ZM0 8.4H6.8V14.7L0 13.7ZM7.7 8.4H16V16L7.7 14.8Z" /></Icon>
    </Start>
    <SearchBox>
      <Icon w={16} h={16} stroke="#333"><circle cx="10" cy="6" r="5" /><path d="M6.5 9.5 1 15" strokeWidth="1.3" /></Icon>
      Type here to search
      <SearchCards><Cards /></SearchCards>
    </SearchBox>
    <TaskApp $w={50}>
      <Icon w={16} h={16} stroke="#fff"><path d="M1 3.5H10M1 13.5H10M3 6.5H14V10.5H3ZM14 1V4M14 13V15" /></Icon>
    </TaskApp>
    <TaskApp $w={50}>
      <svg width="24" height="24" viewBox="0 0 24 24" style={{ display: 'block' }}>
        <path d="M2 13C2 6 7 1.5 13 1.5 19 1.5 23 6 23 11.5 23 15 19 16 17 15 14.5 14 15 10.5 12 9.5 7 8.5 2 13 2 13Z" fill="#3ac27a" />
        <path d="M2 13C1.5 18 6 23 12 23 15 23 18 21.5 20 19.5 16 21.5 11 20.5 9.5 17 8 13.5 10 11 12 9.5 7 8.5 2 13 2 13Z" fill="#1579c5" />
      </svg>
    </TaskApp>
    <TaskApp $w={46}>
      <svg width="22" height="20" viewBox="0 0 22 20" style={{ display: 'block' }}>
        <path d="M0 1H8L10 3H21V7H0Z" fill="#e8b92f" />
        <path d="M0 6H22V19H0Z" fill="#f6d568" />
        <path d="M7 10H15V13H7Z" fill="#4a90c9" />
        <path d="M0 15H22V19H0Z" fill="#e7ad2d" />
      </svg>
    </TaskApp>
    <TaskApp $w={50} $pl={4}>
      <svg width="24" height="24" viewBox="0 0 24 24" style={{ display: 'block' }}>
        <circle cx="12" cy="13.5" r="10.5" fill="#f2692c" />
        <path d="M12 1C17 4 23 8 22.5 14L18 8 14 4Z" fill="#fdb52b" />
        <circle cx="12.5" cy="13.5" r="5.8" fill="#7a3bc9" />
        <path d="M3 10C5 17 12 20 19 17 14 23 4 21 3 10Z" fill="#ee3b3f" />
      </svg>
    </TaskApp>
    <TaskApp $w={50} $active>
      <svg width="24" height="20" viewBox="0 0 24 20" style={{ display: 'block' }}>
        <rect x="4" width="20" height="20" fill="#2b7cd3" />
        <rect x="4" y="5" width="20" height="5" fill="#41a5ee" />
        <rect x="4" y="15" width="20" height="5" fill="#185abd" />
        <rect y="4" width="13" height="12" fill="#185abd" />
        <text x="6.5" y="13.5" fontSize="10" fontFamily="Open Sans" fontWeight="700" textAnchor="middle" fill="#fff">W</text>
      </svg>
    </TaskApp>
    <Tray>
      <TrayIcon $w={24}><Icon w={13} h={7} stroke="#fff"><path d="M.5 6.5 6.5.5 12.5 6.5" /></Icon></TrayIcon>
      <TrayIcon $w={24}><Icon w={13} h={16} stroke="#fff"><path d="M1 5H8V11H1ZM8 7 12 5V11L8 9M2 2.5C4 1 6 1 8 2.5M2 13.5C4 15 6 15 8 13.5" /></Icon></TrayIcon>
      <TrayIcon $w={24}><Icon w={16} h={14} stroke="#fff"><path d="M1 5H3.5L7 1.5V12.5L3.5 9H1ZM9.5 4.5C10.5 6 10.5 8 9.5 9.5M11.5 3C13 5 13 9 11.5 11M13.5 1.5C15.5 4.5 15.5 9.5 13.5 12.5" /></Icon></TrayIcon>
      <TrayIcon $w={24}><Icon w={16} h={14} stroke="#fff"><path d="M4.5 1H15.5V10H4.5M.5 1H4.5V5H.5ZM10 10V13M6.5 13.5H13.5" /></Icon></TrayIcon>
      <Clock>6:36 AM<br />2/24/2026</Clock>
      <Notify><Icon w={16} h={15} stroke="#fff"><path d="M.5.5H15.5V11.5H10L8 14 6 11.5H.5Z" /></Icon></Notify>
    </Tray>
  </Taskbar>
)

export default function App() {
  return (
    <Screen>
      <Global />
      <TitleStrip />
      <Tabs />
      <Ribbon>
        <ClipboardGroup />
        <FontGroup />
        <ParagraphGroup />
        <StylesGroup />
        <EditingGroup />
        <Collapse>
          <Icon w={13} h={7} stroke="#555"><path d="M.5 6.5 6.5.5 12.5 6.5" /></Icon>
        </Collapse>
      </Ribbon>
      <Main>
        <NavigationPane />
        <DocumentPage />
      </Main>
      <Status />
      <TaskStrip />
      <SaveDialog />
      <Watermark>
        ANY
        <svg width="84" height="62" viewBox="0 0 84 62" fill="none" stroke="rgba(160,160,160,0.32)" strokeWidth="3" style={{ display: 'block' }}>
          <path d="M8 2 80 31 8 60ZM20 18 50 31 20 44" />
        </svg>
        RUN
      </Watermark>
    </Screen>
  )
}
